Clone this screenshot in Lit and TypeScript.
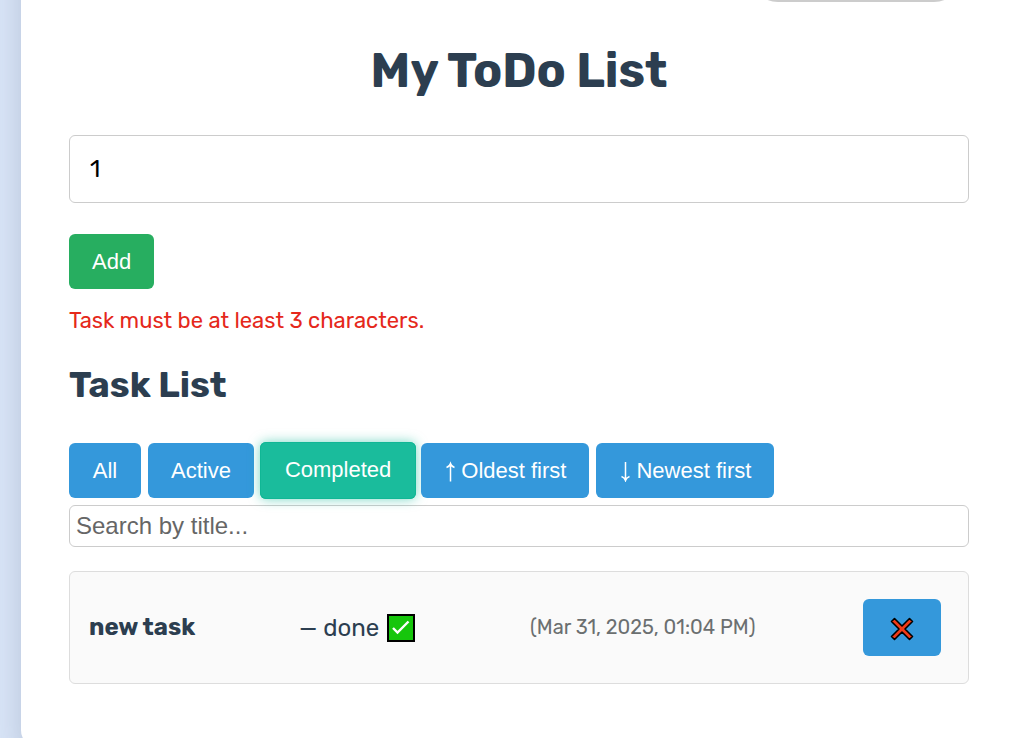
import { LitElement, html, css, nothing } from "lit";
import { customElement, state } from "lit/decorators.js";
import { classMap } from "lit/directives/class-map.js";

interface Task {
  title: string;
  done: boolean;
  created: string;
}

interface Filter {
  label: string;
  arrow?: "up" | "down";
}

const FILTERS: Filter[] = [
  { label: "All" },
  { label: "Active" },
  { label: "Completed" },
  { label: "Oldest first", arrow: "up" },
  { label: "Newest first", arrow: "down" },
];

const ARROWS = {
  up: "M6.5 21.5V3.5M2.5 7.5Q5.5 6.5 6.5 3.5Q7.5 6.5 10.5 7.5",
  down: "M6.5 2V20.5M2.5 16.5Q5.5 17.5 6.5 20.5Q7.5 17.5 10.5 16.5",
};

@customElement("app-root")
export class AppRoot extends LitElement {
  static styles = css`
    :host {
      display: block;
      box-sizing: border-box;
      height: 100vh;
      overflow: hidden;
      padding-left: 21px;
      background: #d9e5f7;
      color: #2c3e50;
      font-family: Rubik, Inter, Roboto, sans-serif;
      font-size: 24px;
      line-height: 36px;
    }
    * {
      box-sizing: border-box;
    }
    .card {
      margin-top: -100px;
      padding: 48px 43px 64px 48px;
      background: #fff;
      border-radius: 18px 0 0 18px;
      box-shadow: 0 12px 30px rgba(44, 62, 100, 0.2);
    }
    .top {
      display: flex;
      justify-content: flex-end;
      padding-right: 8px;
    }
    .theme {
      width: 210px;
      height: 54px;
      border: 2px solid #ccc;
      border-radius: 27px;
      background: #fff;
    }
    h1 {
      margin: 40px 0 36px;
      font-size: 48px;
      line-height: 57px;
      font-weight: 700;
      text-align: center;
    }
    h2 {
      margin: 24px 0 36px;
      font-size: 36px;
      line-height: 44px;
      font-weight: 700;
    }
    input {
      display: block;
      width: 100%;
      border: 1px solid #ccc;
      border-radius: 6px;
      background: #fff;
      color: #000;
      font-size: 24px;
      outline: none;
    }
    .title-input {
      height: 68px;
      padding: 0 20px;
      font-family: Rubik, Inter, sans-serif;
    }
    .search {
      height: 42px;
      padding: 0 6px;
      font-family: "Liberation Sans", Arial, sans-serif;
    }
    .search::placeholder {
      color: #666;
      opacity: 1;
    }
    .btn {
      display: flex;
      align-items: center;
      justify-content: center;
      gap: 4px;
      min-width: 72px;
      height: 55px;
      padding: 0 23px;
      border: 0;
      border-radius: 6px;
      background: #3498db;
      color: #fff;
      font: 22px "Liberation Sans", Arial, sans-serif;
      white-space: nowrap;
      cursor: pointer;
    }
    .add {
      margin-top: 31px;
      background: #27ae60;
    }
    .error {
      margin: 14px 0 0;
      color: #e5281b;
      font-size: 22px;
      line-height: 36px;
    }
    .filters {
      display: flex;
      flex-wrap: wrap;
      gap: 7px;
      margin-bottom: 7px;
    }
    .btn.selected {
      height: 57px;
      margin: -1px -2px -1px -1px;
      padding: 0 25px 2px;
      background: #1abc9c;
      box-shadow: inset 0 0 0 1px #10b795, 0 0 12px rgba(26, 188, 156, 0.6);
    }
    .tasks {
      list-style: none;
      margin: 24px 0 0;
      padding: 0;
    }
    .task {
      display: grid;
      grid-template-columns: 210fr 231fr 333fr auto;
      align-items: center;
      padding: 27px 27px 27px 19px;
      border: 1px solid #ddd;
      border-radius: 6px;
      background: #fafafa;
    }
    .name {
      padding-bottom: 2px;
      font-weight: 700;
    }
    .status {
      display: flex;
      align-items: center;
      gap: 8px;
    }
    .date {
      padding-bottom: 2px;
      color: #6b6f70;
      font-size: 20px;
    }
    .remove {
      width: 78px;
      height: 57px;
      padding: 2px 0 0;
    }
    svg {
      display: block;
    }
  `;

  @state() private filter = "Completed";
  @state() private tasks: Task[] = [
    { title: "new task", done: true, created: "Mar 31, 2025, 01:04 PM" },
  ];

  private remove(task: Task) {
    this.tasks = this.tasks.filter((t) => t !== task);
  }

  private renderArrow(arrow: "up" | "down") {
    return html`<svg width="13" height="22" viewBox="0 0 13 22" aria-hidden="true">
      <path d=${ARROWS[arrow]} fill="none" stroke="currentColor" stroke-width="1.5" />
    </svg>`;
  }

  private renderTask(task: Task) {
    return html`<li class="task">
      <strong class="name">${task.title}</strong>
      <span class="status">
        <span>— ${task.done ? "done" : "active"}</span>
        <svg width="28" height="28" viewBox="0 0 28 28" aria-hidden="true">
          <rect x="1" y="1" width="26" height="26" fill="#16c60c" stroke="#000" stroke-width="2" />
          <path d="M6 14 10.5 18.5 21.5 7.5" fill="none" stroke="#fff" stroke-width="2.4" />
        </svg>
      </span>
      <span class="date">(${task.created})</span>
      <button class="btn remove" aria-label="Delete task" @click=${() => this.remove(task)}>
        <svg width="24" height="24" viewBox="0 0 24 24" aria-hidden="true">
          <path
            d="M4.5 1.5 12 9 19.5 1.5 22.5 4.5 15 12 22.5 19.5 19.5 22.5 12 15 4.5 22.5 1.5 19.5 9 12 1.5 4.5Z"
            fill="#f03a17"
            stroke="#000"
            stroke-width="1.6"
            stroke-linejoin="round"
          />
        </svg>
      </button>
    </li>`;
  }

  render() {
    return html`<main class="card">
      <div class="top"><button class="theme" aria-label="Toggle theme"></button></div>
      <h1>My ToDo List</h1>
      <form @submit=${(e: Event) => e.preventDefault()}>
        <input class="title-input" aria-label="Task title" aria-describedby="title-error" .value=${"1"} />
        <button class="btn add">Add</button>
        <p class="error" id="title-error">Task must be at least 3 characters.</p>
      </form>
      <h2>Task List</h2>
      <div class="filters">
        ${FILTERS.map(
          (f) => html`<button
            class=${classMap({ btn: true, selected: f.label === this.filter })}
            @click=${() => (this.filter = f.label)}
          >${f.arrow ? this.renderArrow(f.arrow) : nothing}<span>${f.label}</span></button>`
        )}
      </div>
      <input class="search" aria-label="Search by title" placeholder="Search by title..." />
      <ul class="tasks">${this.tasks.map((t) => this.renderTask(t))}</ul>
    </main>`;
  }
}
